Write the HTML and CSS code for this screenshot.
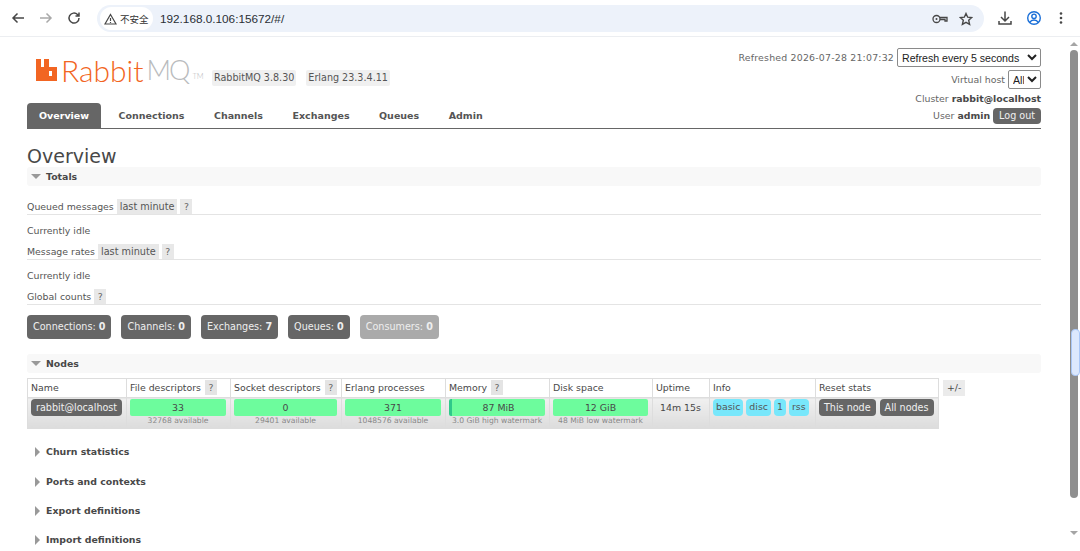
FILE: index.html
```html
<!DOCTYPE html>
<html lang="en">
<head>
  <meta charset="UTF-8">
  <meta name="viewport" content="width=device-width, initial-scale=1.0">
  <title>RabbitMQ Management</title>
  <link rel="stylesheet" href="styles.css">
</head>
<body>
  <div class="browser-bar">
    <div class="nav-icons">
      <svg width="16" height="16" viewBox="0 0 16 16"><path d="M14 8H3M7.500 3.500L3 8l4.500 4.500" fill="none" stroke="#474747" stroke-width="1.500"/></svg>
      <svg width="16" height="16" viewBox="0 0 16 16"><path d="M2 8h11M8.500 3.500L13 8l-4.500 4.500" fill="none" stroke="#a9a9a9" stroke-width="1.500"/></svg>
      <svg width="16" height="16" viewBox="0 0 16 16"><path d="M13 8a5 5 0 1 1-1.500-3.500L13 6M13 2.500V6H9.500" fill="none" stroke="#474747" stroke-width="1.500"/></svg>
    </div>
    <div class="url-pill">
      <div class="security">
        <svg width="13" height="12" viewBox="0 0 13 12"><path d="M6.500 1.500L12 11H1zM6.500 5v3M6.500 9v1" fill="none" stroke="#474747" stroke-width="1.200"/></svg>
        <span>不安全</span>
      </div>
      <span class="url-text">192.168.0.106:15672/#/</span>
      <div class="url-icons">
        <svg width="16" height="12" viewBox="0 0 16 12"><circle cx="4.500" cy="6" r="3.500" fill="none" stroke="#474747" stroke-width="1.300"/><circle cx="4.500" cy="6" r="1" fill="#474747"/><path d="M8 4.500h7v3.500h-2V6.500H8" fill="none" stroke="#474747" stroke-width="1.300"/></svg>
        <svg width="14" height="14" viewBox="0 0 14 14"><path d="M7 1.500l1.700 3.700 4 .4-3 2.700.9 4L7 10.300l-3.600 2 .9-4-3-2.700 4-.4z" fill="none" stroke="#474747" stroke-width="1.400"/></svg>
      </div>
    </div>
    <div class="tool-icons">
      <svg width="16" height="16" viewBox="0 0 16 16"><path d="M8 1.500v9M4 7l4 4 4-4M2 11v3h12v-3" fill="none" stroke="#474747" stroke-width="1.500"/></svg>
      <svg width="16" height="16" viewBox="0 0 16 16"><circle cx="8" cy="8" r="6.300" fill="none" stroke="#1a6fd8" stroke-width="1.400"/><circle cx="8" cy="6.300" r="2.200" fill="none" stroke="#1a6fd8" stroke-width="1.400"/><path d="M3.800 12.300c1-1.800 2.500-2.300 4.200-2.300s3.200.5 4.200 2.300" fill="none" stroke="#1a6fd8" stroke-width="1.400"/></svg>
      <svg class="menu-dots" width="4" height="14" viewBox="0 0 4 14"><circle cx="2" cy="2.500" r="1.300" fill="#474747"/><circle cx="2" cy="7" r="1.300" fill="#474747"/><circle cx="2" cy="11.500" r="1.300" fill="#474747"/></svg>
    </div>
  </div>

  <div class="viewport">
    <div class="page">
      <div class="header">
        <div class="brand">
          <div class="logo">
            <svg width="21" height="22" viewBox="0 0 21 22"><path d="M0 0h5v8h3V0h5v8h3V2h0v6h5v14H0zM13 12v5h3v-5z" fill="#f26522" fill-rule="evenodd"/></svg>
            <span class="logo-rabbit">Rabbit</span><span class="logo-mq">MQ</span><span class="logo-tm">TM</span>
          </div>
          <span class="version">RabbitMQ 3.8.30</span>
          <span class="version">Erlang 23.3.4.11</span>
        </div>
        <div class="status">
          <div class="status-row">
            <span class="refreshed">Refreshed 2026-07-28 21:07:32</span>
            <select class="refresh-select"><option>Refresh every 5 seconds</option></select>
          </div>
          <div class="status-row">
            <span>Virtual host</span>
            <select class="vhost-select"><option>All</option></select>
          </div>
          <div class="status-row cluster-row">Cluster&nbsp;<b>rabbit@localhost</b></div>
        </div>
      </div>

      <div class="tabs">
        <ul class="tab-list">
          <li class="tab active">Overview</li>
          <li class="tab">Connections</li>
          <li class="tab">Channels</li>
          <li class="tab">Exchanges</li>
          <li class="tab">Queues</li>
          <li class="tab">Admin</li>
        </ul>
        <div class="user-row">User&nbsp;<b>admin</b><span class="btn logout">Log out</span></div>
      </div>

      <h1>Overview</h1>

      <div class="section-title"><span class="arrow-down"></span>Totals</div>
      <div class="totals">
        <div class="chart-head">Queued messages <span class="tag">last minute</span><span class="help">?</span></div>
        <p class="idle">Currently idle</p>
        <div class="chart-head">Message rates <span class="tag">last minute</span><span class="help">?</span></div>
        <p class="idle">Currently idle</p>
        <div class="chart-head">Global counts<span class="help">?</span></div>
        <div class="counts">
          <span class="count">Connections: <b>0</b></span>
          <span class="count">Channels: <b>0</b></span>
          <span class="count">Exchanges: <b>7</b></span>
          <span class="count">Queues: <b>0</b></span>
          <span class="count muted">Consumers: <b>0</b></span>
        </div>
      </div>

      <div class="section-title"><span class="arrow-down"></span>Nodes</div>
      <div class="nodes">
        <table class="nodes-table">
          <thead>
            <tr>
              <th class="c-name">Name</th>
              <th class="c-file">File descriptors <span class="help">?</span></th>
              <th class="c-sock">Socket descriptors <span class="help">?</span></th>
              <th class="c-proc">Erlang processes</th>
              <th class="c-mem">Memory <span class="help">?</span></th>
              <th class="c-disk">Disk space</th>
              <th class="c-up">Uptime</th>
              <th class="c-info">Info</th>
              <th class="c-reset">Reset stats</th>
            </tr>
          </thead>
          <tbody>
            <tr>
              <td><span class="btn">rabbit@localhost</span></td>
              <td><div class="bar">33</div><div class="sub">32768 available</div></td>
              <td><div class="bar">0</div><div class="sub">29401 available</div></td>
              <td><div class="bar">371</div><div class="sub">1048576 available</div></td>
              <td><div class="bar mem-bar">87 MiB</div><div class="sub">3.0 GiB high watermark</div></td>
              <td><div class="bar">12 GiB</div><div class="sub">48 MiB low watermark</div></td>
              <td class="uptime">14m 15s</td>
              <td><span class="info-tag">basic</span><span class="info-tag">disc</span><span class="info-tag">1</span><span class="info-tag">rss</span></td>
              <td class="reset-cell"><span class="btn">This node</span><span class="btn">All nodes</span></td>
            </tr>
          </tbody>
        </table>
        <span class="plus-minus">+/-</span>
      </div>

      <div class="collapsed"><span class="arrow-right"></span>Churn statistics</div>
      <div class="collapsed"><span class="arrow-right"></span>Ports and contexts</div>
      <div class="collapsed"><span class="arrow-right"></span>Export definitions</div>
      <div class="collapsed"><span class="arrow-right"></span>Import definitions</div>
    </div>

    <div class="scrollbar">
      <span class="scroll-up"></span>
      <div class="scroll-track">
        <div class="scroll-thumb"></div>
      </div>
      <span class="scroll-down"></span>
    </div>
  </div>
</body>
</html>
```

FILE: styles.css
```css
html, body {
  height: 100%;
}
body {
  margin: 0;
  overflow: hidden;
  font-family: "DejaVu Sans", Verdana, sans-serif;
  font-size: 9.4px;
  color: #484848;
  background: #fff;
}
.browser-bar {
  height: 36px;
  display: flex;
  align-items: center;
  border-bottom: 1px solid #eceef1;
  font-family: "Liberation Sans", "Noto Sans CJK SC", sans-serif;
}
.nav-icons {
  display: flex;
  gap: 12px;
  width: 97px;
  padding-left: 10px;
  box-sizing: border-box;
}
.url-pill {
  width: 887px;
  height: 27px;
  margin-top: 1px;
  border-radius: 14px;
  background: #edf2fa;
  display: flex;
  align-items: center;
  box-sizing: border-box;
  padding-left: 3px;
}
.security {
  height: 23px;
  width: 53px;
  box-sizing: border-box;
  padding-left: 4px;
  border-radius: 12px;
  background: #fff;
  display: flex;
  align-items: center;
  gap: 3px;
  font-size: 9.5px;
  color: #333;
}
.url-text {
  margin-left: 7px;
  font-size: 11.75px;
  color: #2a2f35;
}
.url-icons {
  margin-left: auto;
  margin-right: 11px;
  display: flex;
  align-items: center;
  gap: 11px;
}
.tool-icons {
  flex: 1;
  display: flex;
  align-items: center;
  padding-left: 13px;
  gap: 13px;
}
.tool-icons .menu-dots {
  margin-left: 4px;
}
.viewport {
  display: flex;
  height: 514px;
}
.page {
  flex: 1;
  min-width: 0;
  padding: 0 28px 0 27px;
  overflow: hidden;
}
.header {
  display: flex;
  justify-content: space-between;
  height: 66px;
}
.brand {
  display: flex;
  align-items: flex-start;
  padding: 20px 0 0 9px;
}
.logo {
  display: flex;
  align-items: flex-start;
  width: 176px;
  height: 30px;
  font-family: Lato, sans-serif;
  font-weight: 300;
  font-size: 30px;
  line-height: 26px;
}
.logo svg {
  margin: 2px 4px 0 0;
}
.logo-rabbit {
  color: #f26522;
}
.logo-mq {
  margin-left: 3px;
  font-size: 27px;
  letter-spacing: -2px;
  color: #b9bbbd;
}
.logo-tm {
  margin: 15px 0 0 4px;
  font-size: 7.5px;
  line-height: 10px;
  color: #b9bbbd;
}
.version {
  margin: 13px 10px 0 0;
  padding: 0 2px;
  height: 16px;
  font-size: 9.6px;
  line-height: 16px;
  background: #f0f0f0;
  border-radius: 2px;
  color: #555;
}
.status {
  padding-top: 11px;
  display: flex;
  flex-direction: column;
  align-items: flex-end;
}
.status-row {
  display: flex;
  align-items: center;
  color: #666;
  height: 19px;
  flex-shrink: 0;
}
.status-row + .status-row {
  margin-top: 3px;
}
.status-row b {
  color: #484848;
}
.refreshed {
  letter-spacing: 0.2px;
}
.status .cluster-row {
  height: 18px;
  margin-top: 0;
}
select {
  margin-left: 3px;
  height: 19px;
  padding: 0;
  font-family: "Liberation Sans", sans-serif;
  font-size: 10.6px;
  color: #222;
  background: #fff;
  border: 1px solid #8a8a8a;
  border-radius: 2px;
}
.refresh-select {
  width: 144px;
}
.vhost-select {
  width: 33px;
}
.tabs {
  height: 26px;
  box-sizing: border-box;
  border-bottom: 1px solid #666;
  display: flex;
  justify-content: space-between;
}
.tab-list {
  display: flex;
  margin: 0;
  padding: 0;
  list-style: none;
}
.tab {
  height: 25px;
  line-height: 25px;
  padding: 0 12px;
  margin-right: 5.500px;
  font-size: 9.5px;
  font-weight: bold;
  color: #555;
}
.tab.active {
  background: #666;
  color: #fff;
  border-radius: 4px 4px 0 0;
}
.user-row {
  display: flex;
  align-items: flex-start;
  height: 18px;
  margin-top: 4px;
  line-height: 18px;
  color: #666;
}
.user-row b {
  color: #484848;
}
.btn {
  display: inline-block;
  padding: 0 5px;
  height: 17px;
  font-size: 9.6px;
  line-height: 17px;
  border-radius: 4px;
  background: #666;
  color: #f0f0f0;
  white-space: nowrap;
}
.logout {
  height: 16px;
  line-height: 16px;
  padding: 0 6px;
  margin: 1px 0 0 3px;
}
h1 {
  margin: 17px 0 0;
  font-size: 19px;
  line-height: 21px;
  font-weight: normal;
  color: #484848;
}
.section-title {
  height: 19px;
  line-height: 19px;
  background: #f8f8f8;
  border-radius: 3px;
  font-weight: bold;
  display: flex;
  align-items: center;
}
.arrow-down {
  width: 0;
  height: 0;
  margin: 0 5px 0 4px;
  border-left: 5px solid transparent;
  border-right: 5px solid transparent;
  border-top: 5px solid #999;
}
.arrow-right {
  width: 0;
  height: 0;
  margin: 0 6px 0 8px;
  border-top: 5px solid transparent;
  border-bottom: 5px solid transparent;
  border-left: 5px solid #999;
}
.totals {
  padding-top: 13px;
  height: 168px;
  box-sizing: border-box;
}
.chart-head {
  height: 15px;
  line-height: 15px;
  border-bottom: 1px solid #e4e4e4;
  color: #555;
}
.tag {
  display: inline-block;
  height: 15px;
  padding: 0 3px;
  font-size: 9.7px;
  background: #e8e8e8;
}
.help {
  display: inline-block;
  height: 15px;
  width: 12px;
  margin-left: 3px;
  text-align: center;
  background: #e8e8e8;
  color: #666;
}
.idle {
  margin: 0;
  height: 29px;
  line-height: 31px;
  color: #555;
}
.counts {
  margin-top: 10px;
  display: flex;
  gap: 10px;
}
.count {
  height: 24px;
  font-size: 9.65px;
  line-height: 24px;
  padding: 0 6px;
  border-radius: 4px;
  background: #666;
  color: #eee;
}
.count.muted {
  background: #aaa;
}
.nodes {
  display: flex;
  align-items: flex-start;
  padding-top: 5px;
}
.nodes-table {
  border-collapse: collapse;
  table-layout: fixed;
  width: 911px;
}
.nodes-table th, .nodes-table td {
  border: 1px solid #ddd;
  padding: 0 4px 0 3px;
  box-sizing: border-box;
  vertical-align: top;
  text-align: left;
  white-space: nowrap;
  overflow: hidden;
}
.nodes-table th {
  height: 19px;
  line-height: 18px;
  font-weight: normal;
  background: #fff;
}
.nodes-table th .help {
  margin-left: 1px;
  background: #e4e4e4;
  line-height: 15px;
}
.nodes-table td {
  height: 31px;
  padding-top: 1px;
  background: linear-gradient(#f0f0f0, #dcdcdc);
}
.c-name { width: 99px; }
.c-file { width: 104px; }
.c-sock { width: 111px; }
.c-proc { width: 104px; }
.c-mem { width: 104px; }
.c-disk { width: 103px; }
.c-up { width: 57px; }
.c-info { width: 106px; }
.c-reset { width: 123px; }
.bar {
  height: 17px;
  line-height: 17px;
  text-align: center;
  background: #6dfc9d;
  border-radius: 2px;
}
.mem-bar {
  border-left: 3px solid #2fc98a;
  box-sizing: border-box;
}
.sub {
  height: 10px;
  line-height: 10px;
  text-align: center;
  font-size: 7.6px;
  color: #888;
}
.nodes-table .uptime {
  text-align: center;
  line-height: 17px;
}
.info-tag {
  display: inline-block;
  height: 17px;
  line-height: 16px;
  padding: 0 3px;
  margin-right: 3px;
  border-radius: 4px;
  background: #78e7fb;
  color: #555;
}
.reset-cell .btn + .btn {
  margin-left: 4px;
}
.plus-minus {
  margin: 2px 0 0 4px;
  height: 16px;
  line-height: 16px;
  padding: 0 4px;
  background: #ebebeb;
}
.collapsed {
  height: 19px;
  line-height: 19px;
  margin-top: 10px;
  font-weight: bold;
  display: flex;
  align-items: center;
}
.nodes + .collapsed {
  margin-top: 13px;
}
.nodes + .collapsed + .collapsed {
  margin-top: 11px;
}
.scrollbar {
  width: 11px;
  display: flex;
  flex-direction: column;
  align-items: flex-start;
}
.scroll-up, .scroll-down {
  width: 0;
  height: 0;
  margin-left: 1px;
  border-left: 4px solid transparent;
  border-right: 4px solid transparent;
}
.scroll-up {
  margin-top: 5px;
  border-bottom: 4px solid #a5a5a5;
}
.scroll-down {
  margin-top: 33px;
  border-top: 4px solid #a5a5a5;
}
.scroll-track {
  margin: 4px 0 0 1px;
  width: 8px;
  height: 448px;
  box-sizing: border-box;
  background: #8f8f8f;
  border-radius: 4px;
  padding-top: 279px;
}
.scroll-thumb {
  height: 47px;
  width: 9px;
  margin-left: 1px;
  border: 1px solid #a9c7f7;
  box-sizing: border-box;
  background: #dce8fd;
  border-radius: 4px;
}
```
